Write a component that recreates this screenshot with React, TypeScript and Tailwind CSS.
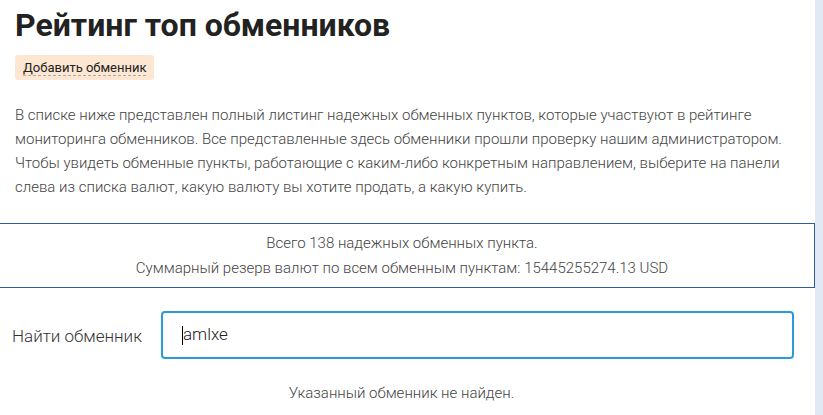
import React from "react";

export default function App() {
  return (
    <div className="flex w-[823px] h-[415px] overflow-hidden bg-white" style={{ fontFamily: "Roboto, 'Liberation Sans', sans-serif" }}>
      <div className="w-[815px] flex flex-col">
        <h1 className="px-[15px] pt-[5px] text-[32px] leading-[40px] font-bold text-[#222]">Рейтинг топ обменников</h1>
        <div className="px-[15px] mt-[10px]">
          <span className="inline-block bg-[#fde6d2] rounded-[3px] px-[8px] h-[25px] leading-[25px] text-[13px] font-normal text-[#222]">
            <span className="border-b border-dashed border-[#aaa] leading-[14px] inline-block">Добавить обменник</span>
          </span>
        </div>
        <p className="px-[15px] mt-[23px] text-[15px] leading-[24px] font-light text-[#444] whitespace-nowrap">
          В списке ниже представлен полный листинг надежных обменных пунктов, которые участвуют в рейтинге<br />
          мониторинга обменников. Все представленные здесь обменники прошли проверку нашим администратором.<br />
          Чтобы увидеть обменные пункты, работающие с каким-либо конкретным направлением, выберите на панели<br />
          слева из списка валют, какую валюту вы хотите продать, а какую купить.
        </p>
        <div className="mt-[24px] h-[65px] border border-l-0 border-[#3059a0] pr-[10px] flex flex-col items-center justify-center text-[15px] leading-[25px] font-light text-[#444]">
          <div>Всего 138 надежных обменных пункта.</div>
          <div>Суммарный резерв валют по всем обменным пунктам: 15445255274.13 USD</div>
        </div>
        <div className="flex items-center mt-[23px] pl-[12px]">
          <div className="w-[149px] text-[17px] font-light text-[#333] pt-[3px]">Найти обменник</div>
          <div className="w-[633px] h-[48px] border-2 border-[#2b9ad9] rounded-[4px] flex items-center pl-[19px]">
            <span className="w-[1px] h-[19px] bg-black"></span>
            <span className="text-[17px] font-light text-[#222]">amlxe</span>
          </div>
        </div>
        <div className="mt-[23px] text-center text-[15px] font-light text-[#444] pr-[12px]">Указанный обменник не найден.</div>
      </div>
      <div className="w-[8px] bg-[#e1eaf4]"></div>
    </div>
  );
}
